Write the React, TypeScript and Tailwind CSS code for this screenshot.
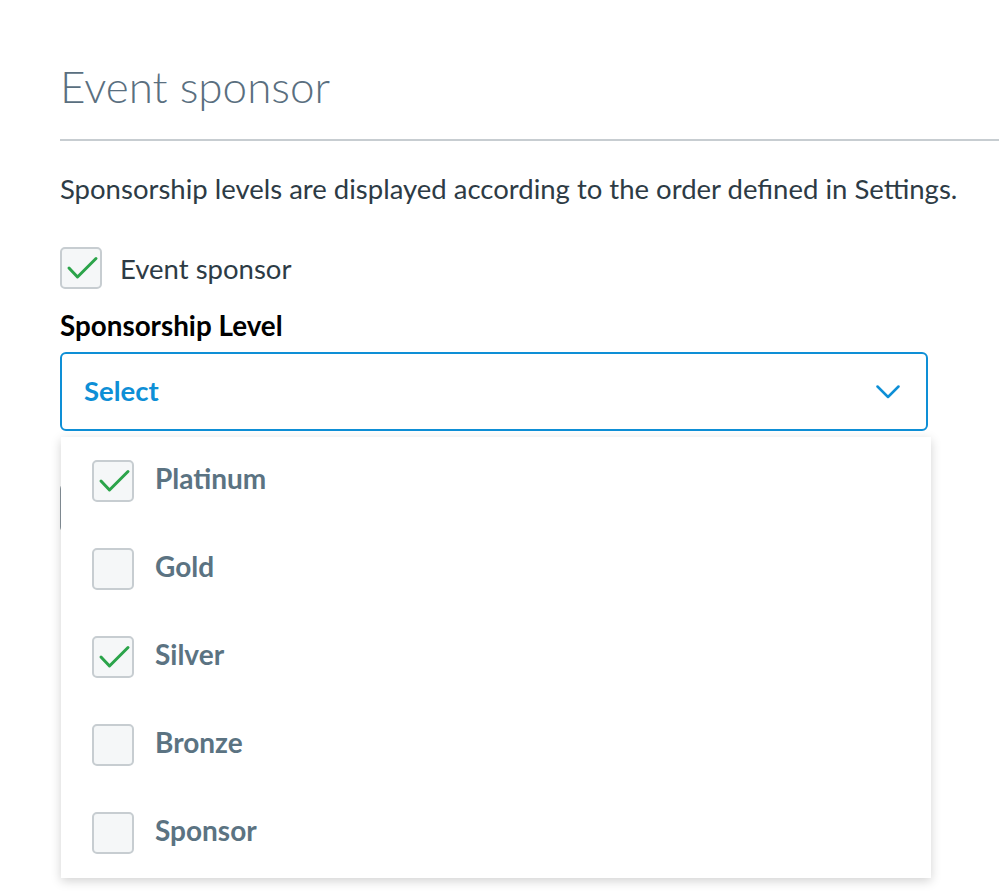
import React from "react";

const levels = [
  { name: "Platinum", checked: true },
  { name: "Gold", checked: false },
  { name: "Silver", checked: true },
  { name: "Bronze", checked: false },
  { name: "Sponsor", checked: false },
];

function Check({ checked }: { checked: boolean }) {
  return (
    <span className="flex h-[42px] w-[42px] shrink-0 items-center justify-center rounded-[5px] border-2 border-[#c7cdd1] bg-[#f5f7f8]">
      {checked && (
        <svg width="42" height="42" viewBox="0 0 42 42" fill="none" className="-m-[2px]">
          <path d="M9 21 L17.5 30 L36 11.5" stroke="#2ba44a" strokeWidth="3" strokeLinecap="round" strokeLinejoin="round" />
        </svg>
      )}
    </span>
  );
}

export default function App() {
  return (
    <div className="min-h-screen bg-white pl-[60px] pt-[60px] text-[#2d3b45]" style={{ fontFamily: "Lato, 'Open Sans', sans-serif" }}>
      <h1 className="text-[44px] font-light leading-[52px] text-[#5a6f7f]">Event sponsor</h1>
      <div className="mt-[27px] border-t-2 border-[#c7cdd1]" />

      <p className="mt-[31px] text-[27.5px] leading-[33px]">
        Sponsorship levels are displayed according to the order defined in Settings.
      </p>

      <label className="mt-[42px] flex items-center gap-[18px]">
        <Check checked />
        <span className="text-[27.5px] leading-[33px]">Event sponsor</span>
      </label>

      <div className="mt-[21px] text-[27.8px] font-bold leading-[32px] text-black">Sponsorship Level</div>

      <div className="relative mt-[10px] w-[868px]">
        <button className="flex h-[79px] w-full items-center justify-between rounded-[6px] border-2 border-[#0e8fd6] pl-[22px] pr-[26px]">
          <span className="-mt-[1px] text-[27.5px] font-bold text-[#0e8fd6]">Select</span>
          <svg width="24" height="14" viewBox="0 0 24 14" fill="none">
            <path d="M1.5 1.5 L12 12 L22.5 1.5" stroke="#0e8fd6" strokeWidth="2.5" strokeLinecap="round" strokeLinejoin="round" />
          </svg>
        </button>

        <div className="mt-[52px] h-[50px] w-[200px] rounded-[6px] bg-[#8a959d]" />

        <div className="absolute left-[1px] top-[85px] w-[870px] bg-white pb-[1px] shadow-[0_3px_10px_rgba(0,0,0,0.18)]">
          {levels.map((l) => (
            <div key={l.name} className="flex h-[88px] items-center gap-[21px] pl-[31px]">
              <Check checked={l.checked} />
              <span className="-mt-[7px] text-[28px] font-bold text-[#5b7382]">{l.name}</span>
            </div>
          ))}
        </div>
      </div>
    </div>
  );
}
